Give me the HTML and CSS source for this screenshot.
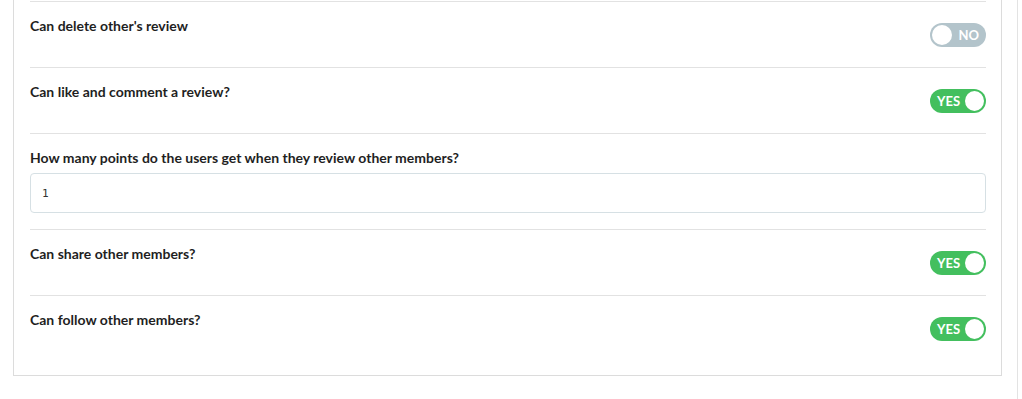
FILE: index.html
```html
<!DOCTYPE html>
<html lang="en">
<head>
    <meta charset="UTF-8" />
    <meta name="viewport" content="width=device-width, initial-scale=1.0" />
    <title>Review settings</title>
    <link rel="stylesheet" href="styles.css">
</head>
<body>
    <div class="page">
        <div class="main">
            <div class="card">
                <div class="row">
                    <span class="label">Can delete other's review</span>
                    <span class="toggle off"><span class="knob"></span><span class="txt">NO</span></span>
                </div>
                <div class="row">
                    <span class="label">Can like and comment a review?</span>
                    <span class="toggle on"><span class="txt">YES</span><span class="knob"></span></span>
                </div>
                <div class="row field">
                    <span class="label">How many points do the users get when they review other members?</span>
                    <input type="text" class="input" value="1" />
                </div>
                <div class="row">
                    <span class="label">Can share other members?</span>
                    <span class="toggle on"><span class="txt">YES</span><span class="knob"></span></span>
                </div>
                <div class="row">
                    <span class="label">Can follow other members?</span>
                    <span class="toggle on"><span class="txt">YES</span><span class="knob"></span></span>
                </div>
            </div>
        </div>
        <div class="side"></div>
    </div>
</body>
</html>
```

FILE: styles.css
```css
body {
    margin: 0;
    padding: 0;
    background: #fff;
    font-family: Lato, "Noto Sans", sans-serif;
    color: #222;
}
.page {
    display: flex;
    height: 399px;
    overflow: hidden;
}
.main {
    width: 1017px;
    padding-left: 13px;
    box-sizing: border-box;
}
.side {
    flex: 1;
    border-left: 1px solid #e3e3e3;
}
.card {
    width: 989px;
    box-sizing: border-box;
    border: 1px solid #dcdcdc;
    border-top: none;
    padding: 1px 15px 14px 16px;
}
.row {
    display: flex;
    justify-content: space-between;
    align-items: flex-start;
    border-top: 1px solid #e2e2e2;
    padding: 15px 0 20px;
}
.row.field {
    flex-direction: column;
    padding-bottom: 16px;
}
.label {
    font-size: 14px;
    font-weight: bold;
    line-height: 18px;
    color: #1f1f1f;
}
.toggle {
    margin-top: 6px;
    width: 56px;
    height: 24px;
    border-radius: 12px;
    box-sizing: border-box;
    padding: 2px;
    display: flex;
    align-items: center;
    justify-content: space-between;
}
.toggle.on {
    background: #43bf5e;
}
.toggle.off {
    background: #b3c4cb;
}
.knob {
    width: 20px;
    height: 20px;
    border-radius: 50%;
    background: #fff;
}
.txt {
    color: #fff;
    font-size: 13px;
    font-weight: bold;
    padding: 0 5px 0 5px;
}
.input {
    margin-top: 6px;
    width: 100%;
    height: 40px;
    box-sizing: border-box;
    border: 1px solid #d6e0e4;
    border-radius: 4px;
    padding: 0 11px;
    font-family: "DejaVu Sans Mono", monospace;
    font-size: 11px;
    color: #333;
}
```
